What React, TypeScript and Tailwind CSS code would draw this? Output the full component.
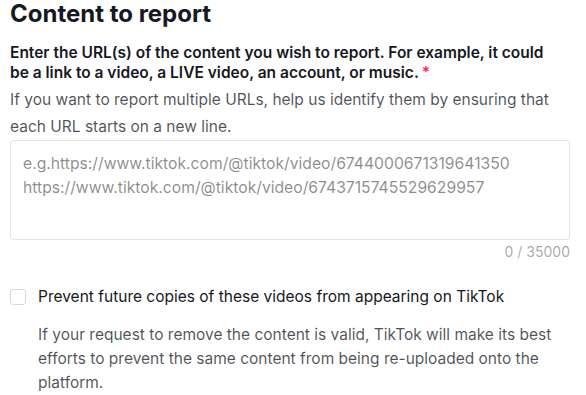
export default function App() {
  return (
    <div className="w-[586px] h-[395px] overflow-hidden bg-white font-['Inter',sans-serif] text-[#161823]">
      <div className="w-[560px] ml-[10px]">
        <h1 className="text-[24px] leading-[26px] font-bold pt-[1px]">Content to report</h1>

        <p className="mt-[16px] w-[550px] text-[15.5px] leading-[20px] font-semibold">
          Enter the URL(s) of the content you wish to report. For example, it could be a link to a video, a LIVE video, an
          account, or music.<span className="text-[#fe2c55] ml-[3px]">*</span>
        </p>
        <p className="mt-[3px] text-[15.5px] leading-[27px] text-[#161823]/75">
          If you want to report multiple URLs, help us identify them by ensuring that each URL starts on a new line.
        </p>

        <div className="h-[100px] rounded-[4px] border border-[#e3e3e4] px-[12px] py-[11px] text-[15.7px] leading-[24px] text-[#161823]/50">
          <div>e.g.https://www.tiktok.com/@tiktok/video/6744000671319641350</div>
          <div>https://www.tiktok.com/@tiktok/video/6743715745529629957</div>
        </div>
        <div className="mt-[2px] text-right text-[14px] leading-[20px] text-[#161823]/40">0 / 35000</div>

        <label className="mt-[24px] flex items-center gap-[12px]">
          <span className="w-[16px] h-[16px] shrink-0 rounded-[3px] border border-[#d8d8da] bg-white" />
          <span className="text-[15.5px] leading-[22px]">Prevent future copies of these videos from appearing on TikTok</span>
        </label>
        <p className="mt-[15px] pl-[28px] text-[15.5px] leading-[24px] text-[#161823]/75">
          If your request to remove the content is valid, TikTok will make its best efforts to prevent the same content
          from being re-uploaded onto the platform.
        </p>
      </div>
    </div>
  );
}
